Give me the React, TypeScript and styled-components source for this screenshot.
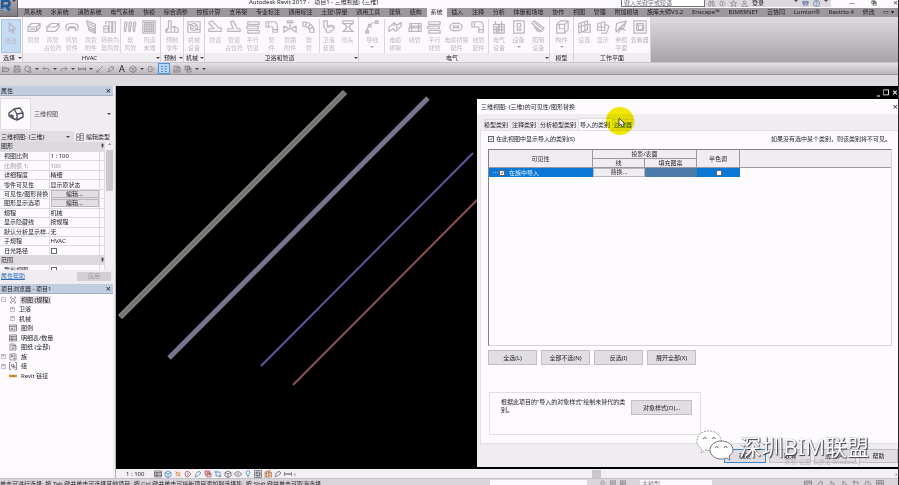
import React from "react";
import styled, { createGlobalStyle, css } from "styled-components";

const GlobalStyle = createGlobalStyle`
  *, *::before, *::after { box-sizing: border-box; }
  html, body, #root { margin: 0; height: 100%; }
  body { overflow: hidden; background: #dedbe0; }
  body, button, input, select, table {
    font-family: "Noto Sans", "Noto Sans CJK SC", sans-serif;
    font-size: 6px;
    line-height: 8px;
    color: #1f1d23;
  }
  button, select { padding: 0; margin: 0; border: 0; background: none; white-space: nowrap; }
`;

/* ---------- icons ---------- */

const Svg = styled.svg<{ $size?: number; $color?: string }>`
  display: block;
  flex: none;
  width: ${(p) => p.$size ?? 10}px;
  height: ${(p) => p.$size ?? 10}px;
  fill: none;
  stroke: ${(p) => p.$color ?? "#77737b"};
  stroke-width: 1.4;
  stroke-linejoin: round;
`;

const paths: Record<string, string> = {
  cursor: "M6 2v10l2.4-2 1.6 4 1.6-.8-1.6-3.6h3z",
  duct: "M1 8l4-4h10v4l-4 5H1zM1 8h10l4-4M11 8v5M3 10.5h6",
  ductGhost: "M1 8l5-4h9v4l-4 5H1zM1 8h10l4-4",
  fitting: "M1 7c0-4 14-4 14 0v3c0 1-3 2-3 2V9H4v3s-3-1-3-2zM4 9c1-2 7-2 8 0",
  louver: "M3 1l10 4v10L6 12zM5 4l8 4M5 7l8 4M6 10l7 3",
  convert: "M1 7h5v7H1zM7 2h3v12H7zM11 2h3v12h-3zM3 5V2h3M1 10h5",
  flex: "M2 3c3-3 3 2 2 4s0 8-2 6c-2-3 1-7 0-10zM7 3c3-3 3 2 2 4s0 8-2 6c-2-3 1-7 0-10zM12 3c3-3 3 2 2 4s0 8-2 6c-2-3 1-7 0-10z",
  grille: "M1 1h14v14H1zM3 3h10v10H3zM3 5.5h10M3 8h10M3 10.5h10M5.5 3v10M8 3v10M10.500 3v10",
  fab: "M4 1h3v8l4-2 4 3v4H1v-3l3-2zM1 14l3-5M7 9v5M11 7v7",
  equip: "M1 2h14v12H1zM8 4a4 4 0 100 8 4 4 0 000-8M5 5l6 6M11 5l-6 6M1 5h3M12 11h3",
  pipe: "M2 2l3-1 7 8h3v4H1v-3h6L1 4z",
  pipeGhost: "M4 2l3-1 5 9h3v3H1v-3h6z",
  parallel: "M2 2h13v3H2zM1 7h13v3H1zM2 12h13v3H2z",
  elbow: "M1 2h9c3 0 4 2 4 5v7h-5V8H1zM4 2v6M9 11h6",
  valve: "M1 7l6 3-6 4zM15 7l-6 3 6 4zM8 10V4M4 3h8M5 1h6v2H5z",
  hose: "M1 2c8 0 13 5 13 12h-5C9 9 6 7 1 7zM5 3L4 7M9 5L7 9M12 8l-4 3",
  toilet: "M2 1h4v7h8c0 3-2 4-4 4v2H5v-3C3 10 2 8 2 6zM6 8c2-3 8-2 8 0",
  sprinkler: "M2 1h12v3l-4 2v4l4 3H2l4-3V6L2 4zM2 4h12M6 8h4",
  wire: "M2 14C2 7 6 3 14 2M1 12h3v3H1zM4 5h3v3H4zM12 1h3v3h-3z",
  tray: "M1 9l6-6 3 3 5-3v4l-6 6-3-3-5 3zM7 3v4M10 6v4",
  conduit: "M2 4h13v3H2zM1 9h14v4H1zM4 4v9M12 4v9",
  plate: "M1 8c0-6 14-6 14 0s-14 6-14 0M5 7h2v2H5zM9 7h2v2H9z",
  panel: "M2 5h5v10H2zM8 5h6v10H8zM4 1v4M11 1v4M2 8h12M2 11h12M5 8v7M11 5v10",
  device: "M2 1h12v14H2zM6 4h4v4H6zM6 10h4v2H6z",
  light: "M1 4l3-3 11 8-3 4zM3 8l8 6M4 3l9 7M6 12l3 1",
  component: "M2 5l4-4h9v10l-4 4H2zM2 5h9v10M11 5l4-4M5 5v5h6",
  workset: "M2 4l10-3v10L2 15zM2 8l10-3M5 3v11M9 2v10M12 5h3v9H7",
  show: "M2 4l8-2v10H2zM2 8h8M6 3v9M10 5l5 2-3 8H6",
  refplane: "M3 4l11-3-3 8-9 3zM2 14L14 2M6 8l7 4M5 15l4-9",
  viewer: "M1 1h14v14H1zM4 4h8v8H4zM6 6h5v5H6zM4 4l2 2",
  open: "M1 13V4h4l1 2h7v2M1 13l3-5h11l-3 5z",
  save: "M2 2h11l1 1v11H2zM5 2v4h6V2M4 14V9h8v5",
  sync: "M2 4l6-2 5 3v6l-5 3-6-3zM8 8l5-3M10 10a3 3 0 105 2",
  undo: "M6 3L2 7l4 4M2 7h9c4 0 4 5 0 6",
  redo: "M10 3l4 4-4 4M14 7H5c-4 0-4 5 0 6",
  measure: "M1 4v8M15 4v8M1 8h14M4 6v4M8 6v4M12 6v4",
  slash: "M2 14L14 2M2 10v4h4",
  tag: "M2 14l3-8 5-4 4 4-5 5zM9 6h2",
  cube: "M2 5l6-3 6 3v7l-6 3-6-3zM2 5l6 3 6-3M8 8v7",
  section: "M8 2a6 6 0 100 12M8 2l6 6-6 6M8 5v6",
  lines: "M2 3h4M2 8h4M2 13h4M9 3h5M9 8h5M9 13h5",
  windows: "M2 2h9v8H2zM6 6h8v8H6zM2 4h9M6 8h8",
  house: "M1 7l5-4 3 5v6l-5-2-3-2zM6 3l6-1 3 5v4l-6 3M9 8l6-1M3 12V9l2 1v3",
  editType: "M1 2h6v5H1zM9 1h6v14H9zM1 9h6v6H1zM9 5h6M9 10h6",
  views: "M3 5V2h3M10 2h3v3M13 11v3h-3M6 14H3v-3M8 5a3 3 0 100 6 3 3 0 000-6",
  legend: "M1 2h14v12H1zM1 5h14M4 8h3v3H4zM9 8h4M9 11h4",
  schedule: "M1 2h14v12H1zM1 5h14M1 8h14M1 11h14M6 5v9",
  sheet: "M2 2h9l3 4v8H2zM5 5h9M5 8h9M5 11h6",
  family: "M2 2h12v12H2zM5 5h3v3H5zM8 11h4M11 5v4",
  group: "M4 1H1v14h3M12 1h3v14h-3M5 5h4v4H5zM8 8h4v4H8z",
  sun: "M8 4a4 4 0 100 8 4 4 0 000-8M3 3l10 10",
  crop: "M4 1v11h11M1 4h11v11",
  bulb: "M8 2a3 3 0 00-2 6v3h4V8a3 3 0 00-2-6M6 14h4",
  eye: "M1 8c3-6 11-6 14 0-3 6-11 6-14 0M8 6v4",
  binoculars: "M2 14V6l2-4h2v12zM10 14V2h2l2 4v8zM6 6h4",
  star: "M8 1l2 5h5l-4 3 2 6-5-3-5 3 2-6-4-3h5z",
  user: "M8 2a3 3 0 100 6 3 3 0 000-6M2 15c0-8 12-8 12 0z",
  help: "M8 1a7 7 0 100 14A7 7 0 008 1M6 6c0-3 4-3 4 0 0 2-2 1-2 4M8 11v2",
  plug: "M2 3h12v6H2zM5 9v5M11 9v5M2 6h12",
};

const Icon = ({ name, size, color }: { name: string; size?: number; color?: string }) => (
  <Svg viewBox="0 0 16 16" $size={size} $color={color} aria-hidden="true">
    <path d={paths[name]} />
  </Svg>
);

/* ---------- frame ---------- */

const Page = styled.div`
  position: relative;
  display: flex;
  flex-direction: column;
  height: 100vh;
  overflow: hidden;
  border-right: 1px solid #28262b;
`;

const TopBars = styled.header`
  display: grid;
  grid-template-columns: 18px 1fr;
  background: #9b979c;
`;

const AppButton = styled.button`
  display: flex;
  align-items: flex-start;
  height: 17px;
  background: linear-gradient(#aaa6ac, #7f7b82);
  border-right: 1px solid #66626a;
  border-bottom: 1px solid #66626a;
`;

const Bars = styled.div`
  min-width: 0;
`;

const TitleBar = styled.div`
  display: grid;
  grid-template-columns: 231px 1fr 84px 126px 67px;
  height: 8px;
  overflow: hidden;
  background: #fcfafd;
`;

const TitleText = styled.h1`
  grid-column: 2;
  margin: -2px 0 0;
  font-size: 6px;
  line-height: 8px;
  font-weight: 400;
  white-space: nowrap;
`;

const Search = styled.input`
  height: 7px;
  min-width: 0;
  margin: 0;
  padding: 0 2px 1px;
  border: 1px solid #77737a;
  border-top: 0;
  background: #fff;
  line-height: 6px;
  &::placeholder { color: #77737a; }
`;

const InfoTools = styled.div`
  display: flex;
  align-items: flex-start;
  gap: 4px;
  height: 7px;
  padding: 0 3px;
  background: #dcd9de;
  line-height: 6px;
  overflow: hidden;
`;

const Spacer = styled.span`
  flex: 1;
`;

const WindowButtons = styled.div`
  display: flex;
  justify-content: space-between;
  padding-left: 18px;
  line-height: 6px;
`;

const Tabs = styled.nav`
  display: flex;
  justify-content: space-between;
  height: 9px;
  padding: 0 4px 0 6px;
  background: #9b979c;
`;

const Tab = styled.button<{ $active?: boolean }>`
  height: 9px;
  line-height: 9px;
  color: #1f1d23;
  ${(p) =>
    p.$active &&
    css`
      margin: 0 -4px;
      padding: 0 4px;
      background: #f8f5f9;
    `}
`;

const Ribbon = styled.section`
  display: flex;
  height: 46px;
  background: linear-gradient(#dedbdf, #a7a3a8);
  border-bottom: 1px solid #c9c5ca;
`;

const RibbonPanel = styled.div<{ $width: number }>`
  display: flex;
  flex-direction: column;
  flex: 0 0 ${(p) => p.$width}px;
  background: #fcf9fd;
  border-right: 1px solid #d5d1d7;
`;

const Tools = styled.div`
  display: flex;
  flex: 1;
  padding: 2px 1px 0;
`;

const Tool = styled.button<{ $wide?: boolean; $selected?: boolean; $split?: boolean }>`
  display: flex;
  flex: ${(p) => (p.$wide ? 5 : 4)} 1 0;
  flex-direction: column;
  align-items: center;
  min-width: 0;
  padding-top: 1px;
  gap: 2px;
  color: #bdb8c0;
  white-space: pre;
  background: ${(p) => (p.$selected ? "#c5daf4" : "transparent")};
  border: ${(p) => (p.$selected ? "1px solid #a5c4e8" : "0")};
  border-left: ${(p) => (p.$split ? "1px solid #dad6dc" : "")};
`;

const PanelTitle = styled.div`
  display: flex;
  align-items: center;
  justify-content: center;
  height: 9px;
  background: #f0edf1;
`;

const TitleLabel = styled.span`
  flex: 1;
  text-align: center;
  white-space: nowrap;
`;

const Caret = styled.i<{ $tone?: string }>`
  flex: none;
  width: 0;
  height: 0;
  border: 2px solid transparent;
  border-top-color: ${(p) => p.$tone ?? "#47434b"};
  border-bottom: 0;
`;

const QuickAccess = styled.div`
  display: flex;
  align-items: center;
  gap: 3px;
  height: 12px;
  padding-left: 2px;
  background: linear-gradient(#e4e1e5, #b9b5ba);
  border-bottom: 1px solid #98949a;
`;

const QuickButton = styled.button<{ $active?: boolean }>`
  display: grid;
  place-items: center;
  min-width: ${(p) => (p.$active ? 12 : 8)}px;
  height: 11px;
  font-size: 9px;
  line-height: 10px;
  background: ${(p) => (p.$active ? "#b9d6f5" : "transparent")};
  border: ${(p) => (p.$active ? "1px solid #4c93dc" : "0")};
`;

const Work = styled.main`
  display: grid;
  grid-template-columns: 116px 1fr;
  flex: 1;
  min-height: 0;
  margin-top: 11px;
`;

/* ---------- side palettes ---------- */

const Side = styled.aside`
  display: flex;
  flex-direction: column;
  min-height: 0;
  padding-right: 2px;
  background: #f0edf2;
  border-right: 1px solid #b8b4bb;
`;

const PaletteTitle = styled.h2`
  display: flex;
  align-items: center;
  justify-content: space-between;
  height: 10px;
  margin: 0;
  padding: 0 2px 0 1px;
  font-size: 6px;
  font-weight: 400;
  background: #c3cde0;
  border-bottom: 1px solid #a4aec1;
`;

const CloseButton = styled.button`
  font-size: 9px;
`;

const TypePicker = styled.button`
  display: grid;
  grid-template-columns: 34px 1fr 6px;
  align-items: center;
  height: 35px;
  text-align: left;
  color: #55515a;
`;

const Thumb = styled.span`
  display: grid;
  place-items: center;
  height: 32px;
  margin-right: 3px;
  background: #fcfafd;
  border: 1px solid #dedbe1;
`;

const InstanceRow = styled.div`
  display: grid;
  grid-template-columns: 74px 1fr;
  gap: 2px;
  height: 11px;
`;

const InstanceSelect = styled.select`
  min-width: 0;
  appearance: none;
  padding-left: 1px;
`;

const SelectWrap = styled.label`
  display: grid;
  grid-template-columns: 1fr 8px;
  align-items: center;
  background: #e1dee3;
`;

const EditType = styled.button`
  display: flex;
  align-items: center;
  gap: 2px;
`;

const GridFrame = styled.div`
  display: grid;
  grid-template-columns: 1fr 8px;
  height: 128px;
  overflow: hidden;
`;

const PropTable = styled.table`
  width: 100%;
  height: 133px;
  border-collapse: collapse;
  table-layout: fixed;
  background: #fcfafd;
  th, td { padding: 0; height: 9px; line-height: 8px; font-weight: 400; text-align: left; white-space: nowrap; overflow: hidden; border-bottom: 1px solid #dcd9df; border-right: 1px solid #dcd9df; }
  th { padding-left: 4px; }
  td { padding-left: 1px; }
`;

const GroupRow = styled.tr`
  && th { padding-left: 1px; background: #dcd9dd; border-right: 0; }
  && td { background: #dcd9dd; border-right: 0; }
`;

const PropRow = styled.tr<{ $muted?: boolean }>`
  th, td { color: ${(p) => (p.$muted ? "#9a969e" : "#1f1d23")}; }
`;

const CellButton = styled.button`
  display: block;
  width: 100%;
  height: 8px;
  background: #e2dfe4;
  border: 1px solid #bbb7be;
  line-height: 6px;
`;

const Check = styled.input`
  appearance: none;
  display: block;
  flex: none;
  width: 6px;
  height: 6px;
  margin: 0;
  background: #fff;
  border: 1px solid #67636b;
  &:checked {
    background: #fff url("data:image/svg+xml,%3Csvg xmlns='http://www.w3.org/2000/svg' viewBox='0 0 6 6'%3E%3Cpath d='M1 3l1.500 1.500L5 1' fill='none' stroke='%23222' /%3E%3C/svg%3E");
  }
`;

const Scrollbar = styled.div`
  display: flex;
  flex-direction: column;
  align-items: center;
  background: #f3f0f4;
`;

const Thumbbar = styled.div`
  width: 7px;
  height: 41px;
  background: #cbc8cd;
`;

const ApplyRow = styled.div`
  display: flex;
  justify-content: space-between;
  align-items: center;
  height: 14px;
  padding: 0 2px 2px 1px;
`;

const HelpLink = styled.a`
  color: #2d6fb8;
`;

const ApplyButton = styled.button`
  width: 34px;
  height: 9px;
  background: #d3d0d5;
  color: #98949b;
`;

const Tree = styled.ul`
  display: flex;
  flex: 1;
  flex-direction: column;
  margin: 0;
  padding: 1px 0 0;
  list-style: none;
  background: #fdfbfe;
`;

const TreeItem = styled.li<{ $deep?: boolean }>`
  display: flex;
  align-items: center;
  gap: 3px;
  height: 9px;
  padding-left: ${(p) => (p.$deep ? 10 : 1)}px;
  &:nth-child(even) { height: 10px; }
`;

const Toggle = styled.button`
  width: 5px;
  height: 5px;
  border: 1px solid #c4c0c8;
  color: #77737b;
  line-height: 3px;
  font-size: 5px;
`;

const NoToggle = styled.span`
  width: 5px;
`;

const TreeLabel = styled.span<{ $selected?: boolean }>`
  padding: 0 1px;
  background: ${(p) => (p.$selected ? "#dedbe0" : "transparent")};
`;

/* ---------- viewport ---------- */

const Stage = styled.section`
  display: grid;
  grid-template-rows: 1fr 9px;
  min-width: 0;
  min-height: 0;
`;

const Viewport = styled.div`
  position: relative;
  min-height: 0;
  overflow: hidden;
  background: #000;
`;

const Drawing = styled.svg`
  display: block;
  width: 783px;
  height: 384px;
`;

const ViewButtons = styled.div`
  position: absolute;
  top: 3px;
  right: 0;
  display: flex;
  gap: 3px;
  button { color: #f0edf2; font-size: 7px; font-weight: 700; }
`;

const ViewBar = styled.div`
  display: grid;
  grid-template-columns: 361px 1fr;
  background: #f3f0f4;
`;

const ViewControls = styled.div`
  display: flex;
  align-items: center;
  gap: 2px;
  padding-left: 10px;
`;

const Scale = styled.span`
  width: 26px;
  white-space: pre;
`;

const HScroll = styled.div`
  display: flex;
  justify-content: space-between;
  align-items: center;
  padding: 0 1px 0 115px;
`;

const HThumb = styled.div`
  width: 9px;
  height: 8px;
  background: #c9c6cc;
`;

/* ---------- dialog ---------- */

const Dialog = styled.div`
  position: absolute;
  inset: 13px 0 2px 361px;
  display: flex;
  flex-direction: column;
  background: #f0edf2;
`;

const DialogTitle = styled.div`
  display: flex;
  justify-content: space-between;
  align-items: center;
  height: 15px;
  padding: 0 0 0 4px;
  background: #fdfbfe;
`;

const DialogTabs = styled.div`
  display: flex;
  align-items: flex-end;
  height: 16px;
  padding-left: 6px;
`;

const DialogTab = styled.button<{ $active?: boolean; $hover?: boolean }>`
  height: ${(p) => (p.$active ? 12 : 11)}px;
  padding: 0 2px 0 1px;
  border: 1px solid #dedbe1;
  border-bottom: 0;
  border-left: 0;
  background: ${(p) => (p.$active ? "#fdfbfe" : "transparent")};
  color: ${(p) => (p.$hover ? "#245a9a" : "#1f1d23")};
`;

const Sheet = styled.div`
  flex: 1;
  display: flex;
  flex-direction: column;
  margin-left: 3px;
  padding: 4px 6px 8px 7px;
  background: #fdfbfe;
  border: 1px solid #e2dfe4;
  border-right: 0;
`;

const Options = styled.div`
  display: flex;
  justify-content: space-between;
  height: 14px;
  padding-right: 1px;
`;

const CheckLabel = styled.label`
  display: flex;
  align-items: center;
  height: 8px;
  gap: 2px;
`;

const ListBox = styled.div`
  height: 197px;
  border: 1px solid #d8d5da;
  border-top-color: #85818a;
  border-left-color: #85818a;
  background: #fdfbfe;
`;

const CatTable = styled.table`
  width: 100%;
  border-collapse: separate;
  border-spacing: 0;
  table-layout: fixed;
  th { height: 9px; padding: 0; line-height: 8px; font-weight: 400; background: #f0edf2; border-right: 1px solid #9b98a0; border-bottom: 1px solid #9b98a0; }
  th[rowspan] { height: 18px; }
  th:empty { border-right: 0; }
  td { height: 9px; padding: 0; line-height: 8px; }
`;

const CatCell = styled.td<{ $fill?: string }>`
  background: ${(p) => p.$fill ?? "transparent"};
`;

const CatName = styled.label`
  display: flex;
  align-items: center;
  gap: 4px;
  padding-left: 4px;
  color: #dcecff;
`;

const Stub = styled.span`
  width: 5px;
  margin-right: -3px;
  border-top: 1px dotted #8cc1f0;
`;

const CenterCheck = styled.span`
  display: grid;
  place-items: center;
`;

const Override = styled.button`
  display: block;
  width: 100%;
  height: 9px;
  background: #f0edf2;
  border: 1px solid #b9b6bd;
  line-height: 7px;
`;

const ButtonRow = styled.div`
  display: flex;
  gap: 4px;
  margin-top: 4px;
`;

const PushButton = styled.button<{ $width?: number; $default?: boolean }>`
  flex: none;
  width: ${(p) => p.$width ?? 49}px;
  height: 15px;
  background: #e1dee3;
  border: ${(p) => (p.$default ? "1px solid #3c86c8" : "1px solid #c0bdc3")};
`;

const GroupBox = styled.div`
  display: flex;
  justify-content: space-between;
  align-items: flex-start;
  width: 212px;
  height: 43px;
  margin: auto 0 0 1px;
  padding: 7px 8px 0 11px;
  border: 1px solid #e2dfe4;
`;

const Note = styled.p`
  width: 127px;
  margin: -2px 0 0;
`;

const Footer = styled.div`
  display: flex;
  justify-content: flex-end;
  gap: 3px;
  height: 23px;
  padding-top: 5px;
  ${PushButton} { height: 14px; }
`;

const Spotlight = styled.div`
  position: absolute;
  top: 21px;
  left: 490px;
  width: 28px;
  height: 28px;
  border-radius: 50%;
  background: #f2ec00;
  mix-blend-mode: multiply;
`;

const Pointer = styled.svg`
  position: absolute;
  top: 32px;
  left: 502px;
  width: 8px;
  height: 10px;
`;

/* ---------- status and watermark ---------- */

const Status = styled.footer`
  display: grid;
  grid-template-columns: 490px 97px 53px 72px 1fr;
  height: 7px;
  padding-top: 1px;
  overflow: hidden;
  background: #d9d6db;
  border-top: 1px solid #c4c1c7;
  white-space: nowrap;
`;

const StatusText = styled.span`
  font-family: "Liberation Sans", "Noto Sans CJK SC", sans-serif;
  overflow: hidden;
`;

const StatusField = styled.span`
  padding-left: 2px;
  background: #fcfafd;
  color: #77737b;
`;

const StatusIcons = styled.span`
  display: flex;
  justify-content: flex-end;
  gap: 4px;
  padding-right: 14px;
`;

const Watermark = styled.div`
  position: absolute;
  right: 29px;
  bottom: 23px;
  display: flex;
  align-items: center;
  gap: 5px;
  color: #fff;
  font-size: 22px;
  line-height: 32px;
  white-space: nowrap;
  text-shadow: 1px 1px 1px #3d3a40, 0 0 1px #7a767d;
`;

const ActivateNote = styled.div`
  position: absolute;
  right: 34px;
  bottom: 19px;
  color: #b3afb6;
`;

const ChatLogo = styled.svg`
  width: 38px;
  height: 32px;
`;

/* ---------- content ---------- */

type ToolDef = [string, string, { wide?: boolean; split?: boolean; selected?: boolean; drop?: boolean }?];

const ribbon: { title: string; width: number; arrow?: boolean; tools: ToolDef[] }[] = [
  { title: "选择", width: 23, arrow: true, tools: [["cursor", "修改", { selected: true }]] },
  {
    title: "HVAC", width: 138, arrow: true,
    tools: [
      ["duct", "风管"], ["ductGhost", "风管\n占位符"], ["fitting", "风管\n管件"], ["louver", "风管\n附件"],
      ["convert", "转换为\n软风管"], ["flex", "软\n风管", { split: true }], ["grille", "风道\n末端"],
    ],
  },
  { title: "预制", width: 23, arrow: true, tools: [["fab", "预制\n零件"]] },
  { title: "机械", width: 21, arrow: true, tools: [["equip", "机械\n设备"]] },
  {
    title: "卫浴和管道", width: 154, arrow: true,
    tools: [
      ["pipe", "管道"], ["pipeGhost", "管道\n占位符"], ["parallel", "平行\n管道"], ["elbow", "管\n件"],
      ["valve", "管路\n附件"], ["hose", "软\n管"], ["toilet", "卫浴\n装置", { split: true }], ["sprinkler", "喷头"],
    ],
  },
  {
    title: "电气", width: 191, arrow: true,
    tools: [
      ["wire", "导线", { drop: true, wide: true }], ["tray", "电缆\n桥架", { split: true }], ["conduit", "线管"], ["parallel", "平行\n线管"],
      ["plate", "电缆桥架\n配件", { wide: true }], ["elbow", "线管\n配件"], ["panel", "电气\n设备", { split: true }],
      ["device", "设备", { drop: true }], ["light", "照明\n设备"],
    ],
  },
  { title: "模型", width: 24, tools: [["component", "构件", { drop: true }]] },
  {
    title: "工作平面", width: 77,
    tools: [["workset", "设置"], ["show", "显示"], ["refplane", "参照\n平面"], ["viewer", "查看器"]],
  },
];

const tabs = [
  "风系统", "水系统", "消防系统", "电气系统", "快模", "综合调整", "校核计算", "支吊架", "专业标注", "通用标注",
  "土建\\算量", "通用工具", "建筑", "结构", "系统", "插入", "注释", "分析", "体量和场地", "协作", "视图", "管理",
  "附加模块", "族库大师V3.2", "Enscape™", "BIMERNET", "云协同", "Lumion®", "Revizto 4", "修改",
];

const quick: (string | null)[] = [
  "open", "save", "sync", null, "undo", null, "redo", null, "measure", null, "slash", "tag", "A", "cube", null,
  "section", "lines", "sheet", "windows", null,
];

const props: [string, string, string?][] = [
  ["视图比例", "1 : 100"],
  ["比例值 1:", "100", "muted"],
  ["详细程度", "精细"],
  ["零件可见性", "显示原状态"],
  ["可见性/图形替换", "编辑...", "button"],
  ["图形显示选项", "编辑...", "button"],
  ["规程", "机械"],
  ["显示隐藏线", "按规程"],
  ["默认分析显示样...", "无"],
  ["子规程", "HVAC"],
  ["日光路径", "", "check"],
];

const PropValue = ({ label, value, kind }: { label: string; value: string; kind?: string }) => {
  if (kind === "button") return <CellButton>{value}</CellButton>;
  if (kind === "check") return <Check type="checkbox" aria-label={label} />;
  return <>{value}</>;
};

const tree: { label: string; icon?: string; deep?: boolean; sign?: string; selected?: boolean }[] = [
  { label: "视图 (规程)", icon: "views", sign: "−", selected: true },
  { label: "卫浴", deep: true, sign: "+" },
  { label: "机械", deep: true, sign: "+" },
  { label: "图例", icon: "legend" },
  { label: "明细表/数量", icon: "schedule" },
  { label: "图纸 (全部)", icon: "sheet" },
  { label: "族", icon: "family", sign: "+" },
  { label: "组", icon: "group", sign: "+" },
  { label: "Revit 链接", icon: "link" },
];

const viewIcons: [string, string][] = [
  ["schedule", "#55515a"], ["cube", "#2b7fc0"], ["sun", "#d07a28"], ["section", "#a0485a"], ["tag", "#5580a8"],
  ["windows", "#a04858"], ["crop", "#3b78b8"], ["cube", "#55515a"], ["eye", "#55515a"], ["bulb", "#4b8cc8"],
  ["viewer", "#55515a"], ["workset", "#b06a3c"], ["tag", "#66626a"], ["measure", "#66626a"],
];

const App = () => (
  <Page>
    <GlobalStyle />
    <TopBars>
      <AppButton aria-label="应用程序菜单">
        <Svg viewBox="0 0 16 16" $size={12} $color="#205c9c" aria-hidden="true">
          <path d="M3 0v14M3 1h6c5 0 5 7 0 7H4M8 8l5 6" strokeWidth="3.500" />
          <path d="M1 13l4-1 2 3" stroke="#8cb9e2" />
        </Svg>
        <Caret />
      </AppButton>
      <Bars>
        <TitleBar>
          <TitleText>Autodesk Revit 2017 -&nbsp;&nbsp; 项目1 - 三维视图: {"{三维}"}</TitleText>
          <Search placeholder="键入关键字或短语" aria-label="搜索" />
          <InfoTools>
            <Icon name="binoculars" size={7} />
            <Icon name="section" size={7} />
            <Icon name="star" size={7} />
            <Icon name="user" size={7} />
            <span>登录</span>
            <Spacer />
            <Caret />
            <Icon name="plug" size={7} color="#3e4f9c" />
            <Icon name="help" size={7} color="#3d5f98" />
            <Caret />
          </InfoTools>
          <WindowButtons>
            <span>—</span>
            <Icon name="windows" size={6} color="#333" />
            <span>✕</span>
          </WindowButtons>
        </TitleBar>
        <Tabs>
          {tabs.map((t) => (
            <Tab key={t} $active={t === "系统"}>{t}</Tab>
          ))}
          <Tab aria-label="显示选项">▭ ▾</Tab>
        </Tabs>
      </Bars>
    </TopBars>

    <Ribbon>
      {ribbon.map((p) => (
        <RibbonPanel key={p.title} $width={p.width}>
          <Tools>
            {p.tools.map(([icon, label, o]) => (
              <Tool key={icon + label} $wide={o?.wide} $split={o?.split} $selected={o?.selected}>
                <Icon name={icon} size={14} color="#bab6be" />
                <span>{label}</span>
                {o?.drop && <Caret $tone="#aaa6ae" />}
              </Tool>
            ))}
          </Tools>
          <PanelTitle>
            <TitleLabel>{p.title}</TitleLabel>
            {p.arrow && <Caret />}
          </PanelTitle>
        </RibbonPanel>
      ))}
    </Ribbon>

    <QuickAccess>
      {quick.map((q, i) =>
        q === null ? (
          <Caret key={i} />
        ) : (
          <QuickButton key={i} $active={q === "lines"} aria-label={q}>
            {q === "A" ? "A" : <Icon name={q} size={8} color={q === "lines" ? "#2f70b4" : undefined} />}
          </QuickButton>
        ),
      )}
      <Caret />
    </QuickAccess>

    <Work>
      <Side>
        <PaletteTitle>属性<CloseButton aria-label="关闭属性">×</CloseButton></PaletteTitle>
        <TypePicker>
          <Thumb><Icon name="house" size={16} color="#4b4d5c" /></Thumb>
          三维视图
          <Caret />
        </TypePicker>
        <InstanceRow>
          <SelectWrap>
            <InstanceSelect aria-label="实例"><option>三维视图: {"{三维}"}</option></InstanceSelect>
            <Caret />
          </SelectWrap>
          <EditType><Icon name="editType" size={8} />编辑类型</EditType>
        </InstanceRow>
        <GridFrame>
          <PropTable>
            <colgroup><col width="49" /><col width="50" /><col /></colgroup>
            <tbody>
              <GroupRow><th colSpan={2}>图形</th><td>⇞</td></GroupRow>
              {props.map(([label, value, kind]) => (
                <PropRow key={label} $muted={kind === "muted"}>
                  <th scope="row">{label}</th>
                  <td><PropValue label={label} value={value} kind={kind} /></td>
                  <td />
                </PropRow>
              ))}
              <GroupRow><th colSpan={2}>范围</th><td>⇞</td></GroupRow>
              <PropRow>
                <th scope="row">裁剪视图</th>
                <td><Check type="checkbox" aria-label="裁剪视图" /></td>
                <td />
              </PropRow>
            </tbody>
          </PropTable>
          <Scrollbar>
            <span>⌃</span>
            <Thumbbar />
            <Spacer />
            <span>⌄</span>
          </Scrollbar>
        </GridFrame>
        <ApplyRow>
          <HelpLink href="#help">属性帮助</HelpLink>
          <ApplyButton disabled>应用</ApplyButton>
        </ApplyRow>
        <PaletteTitle>项目浏览器 - 项目1<CloseButton aria-label="关闭项目浏览器">×</CloseButton></PaletteTitle>
        <Tree>
          {tree.map((n) => (
            <TreeItem key={n.label} $deep={n.deep}>
              {n.sign ? <Toggle>{n.sign}</Toggle> : <NoToggle />}
              {n.icon === "link" ? (
                <Svg viewBox="0 0 16 16" $size={8} $color="#d2963a" aria-hidden="true">
                  <path d="M0 8h16" strokeWidth="5" />
                  <path d="M5 8h6" stroke="#8a6428" />
                </Svg>
              ) : (
                n.icon && <Icon name={n.icon} size={8} color="#66626a" />
              )}
              <TreeLabel $selected={n.selected}>{n.label}</TreeLabel>
            </TreeItem>
          ))}
        </Tree>
      </Side>

      <Stage>
        <Viewport>
          <Drawing viewBox="0 0 783 384" aria-label="三维视图">
            <path d="M4 231L229 6" stroke="#83847f" strokeWidth="6" />
            <path d="M4 231L229 6" stroke="#6f706b" strokeWidth="2" />
            <path d="M53 272L312 12" stroke="#77748f" strokeWidth="5" />
            <path d="M145 280L357 67" stroke="#5b58a0" strokeWidth="2" />
            <path d="M177 299L363 112" stroke="#8f5250" strokeWidth="2" />
          </Drawing>
          <ViewButtons>
            <button aria-label="最小化">‗</button>
            <button aria-label="还原">❐</button>
            <button aria-label="关闭">✕</button>
          </ViewButtons>
          <Dialog role="dialog" aria-label="可见性/图形替换">
            <DialogTitle>
              <span>三维视图: {"{三维}"}的可见性/图形替换</span>
              <CloseButton aria-label="关闭">×</CloseButton>
            </DialogTitle>
            <DialogTabs role="tablist">
              <DialogTab role="tab">模型类别</DialogTab>
              <DialogTab role="tab">注释类别</DialogTab>
              <DialogTab role="tab">分析模型类别</DialogTab>
              <DialogTab role="tab" $active>导入的类别</DialogTab>
              <DialogTab role="tab" $hover>过滤器</DialogTab>
            </DialogTabs>
            <Sheet>
              <Options>
                <CheckLabel><Check type="checkbox" defaultChecked />在此视图中显示导入的类别(S)</CheckLabel>
                <span>如果没有选中某个类别，则该类别将不可见。</span>
              </Options>
              <ListBox>
                <CatTable>
                  <colgroup><col width="104" /><col width="52" /><col width="52" /><col width="43" /><col /></colgroup>
                  <thead>
                    <tr>
                      <th rowSpan={2}>可见性</th>
                      <th colSpan={2}>投影/表面</th>
                      <th rowSpan={2}>半色调</th>
                      <th rowSpan={2} />
                    </tr>
                    <tr><th>线</th><th>填充图案</th></tr>
                  </thead>
                  <tbody>
                    <tr>
                      <CatCell $fill="#0b78d6"><CatName><Stub /><Check type="checkbox" defaultChecked />在族中导入</CatName></CatCell>
                      <CatCell><Override>替换...</Override></CatCell>
                      <CatCell $fill="#4c7aa9" />
                      <CatCell $fill="#0b78d6"><CenterCheck><Check type="checkbox" aria-label="半色调" /></CenterCheck></CatCell>
                      <CatCell />
                    </tr>
                  </tbody>
                </CatTable>
              </ListBox>
              <ButtonRow>
                <PushButton>全选(L)</PushButton>
                <PushButton>全部不选(N)</PushButton>
                <PushButton>反选(I)</PushButton>
                <PushButton>展开全部(X)</PushButton>
              </ButtonRow>
              <GroupBox>
                <Note>根据此项目的“导入的对象样式”绘制未替代的类别。</Note>
                <PushButton $width={61}>对象样式(O)...</PushButton>
              </GroupBox>
            </Sheet>
            <Footer>
              <PushButton $width={42} $default>确定</PushButton>
              <PushButton $width={42}>取消</PushButton>
              <PushButton $width={42}>应用(A)</PushButton>
              <PushButton $width={39}>帮助</PushButton>
            </Footer>
          </Dialog>
          <Spotlight />
          <Pointer viewBox="0 0 8 10" aria-hidden="true">
            <path d="M1 0v8l2-2 1 3 2-1-1-2h2z" fill="#fff" stroke="#55552a" strokeWidth="1" />
          </Pointer>
        </Viewport>
        <ViewBar>
          <ViewControls>
            <Scale>1 : 100</Scale>
            {viewIcons.map(([name, color], i) => (
              <Icon key={i} name={name} size={8} color={color} />
            ))}
            <span>‹</span>
          </ViewControls>
          <HScroll><HThumb /><span>›</span></HScroll>
        </ViewBar>
      </Stage>
    </Work>

    <Status>
      <StatusText>单击可进行选择; 按 Tab 键并单击可选择其他项目; 按 Ctrl 键并单击可将新项目添加到选择集; 按 Shift 键并单击可取消选择。</StatusText>
      <StatusField />
      <StatusIcons>
        <Icon name="section" size={6} />
        <Icon name="legend" size={6} />
        <Icon name="schedule" size={6} />
      </StatusIcons>
      <StatusField>主模型</StatusField>
      <StatusIcons>
        {["legend", "tag", "cursor", "cursor", "crop", "section", "viewer"].map((n, i) => (
          <Icon key={i} name={n} size={8} />
        ))}
      </StatusIcons>
    </Status>
    <ActivateNote>转到“设置”以激活 Windows。</ActivateNote>
    <Watermark>
      <ChatLogo viewBox="0 0 38 32" aria-hidden="true">
        <path d="M13 1C6 1 1 5 1 11c0 4 2 6 5 8l-1 4 5-3c3 1 7 1 9-1 6-2 7-6 6-9-1-5-5-9-12-9z" fill="#fff" stroke="#a09ca4" strokeDasharray="2 1" />
        <path d="M25 11c-6 0-11 4-11 9s5 9 11 9c2 0 3 0 5-1l4 2-1-4c3-2 4-4 4-6 0-5-5-9-12-9z" fill="#fff" stroke="#77737a" />
        <path d="M7 9c1-2 3-2 3 0M16 9c1-2 3-2 3 0M19 18c1-2 3-2 3 0M28 18c1-2 3-2 3 0" fill="none" stroke="#4a474d" />
      </ChatLogo>
      <span>深圳BIM联盟</span>
    </Watermark>
  </Page>
);

export default App;
